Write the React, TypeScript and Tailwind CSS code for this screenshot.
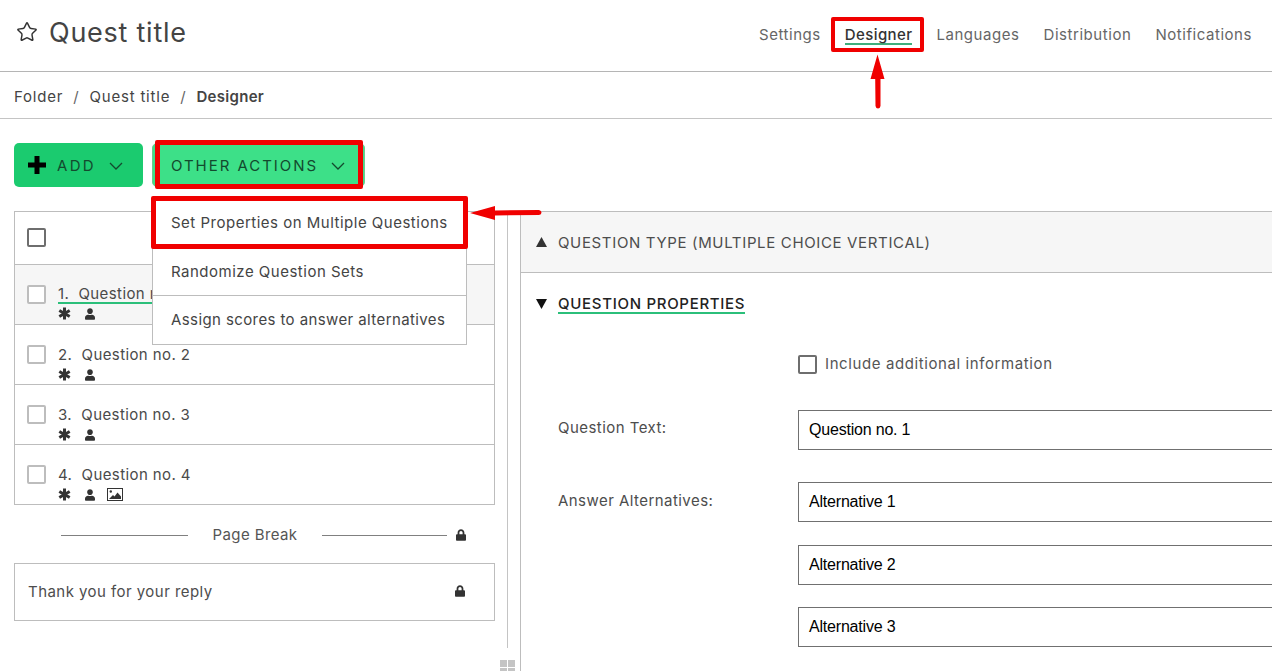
import { Star } from "lucide-react";
import { FaUser, FaLock } from "react-icons/fa";

const font = "font-['Inter','Liberation_Sans',sans-serif]";

function Check({ dark = false }: { dark?: boolean }) {
  return <span className={`block w-[19px] h-[19px] shrink-0 rounded-[2px] border-2 bg-white ${dark ? "border-[#6e6e6e]" : "border-[#bdbdbd]"}`} />;
}

function Asterisk() {
  return (
    <svg width="13" height="13" viewBox="0 0 13 13" className="shrink-0">
      <path d="M6.5 0.5V12.5M1.3 3.5L11.7 9.5M11.7 3.5L1.3 9.5" stroke="#333" strokeWidth="3" />
    </svg>
  );
}

function ImageIcon() {
  return (
    <svg width="16" height="13" viewBox="0 0 16 13" className="shrink-0">
      <rect x="0.5" y="0.5" width="15" height="12" fill="#fff" stroke="#333" />
      <circle cx="3.8" cy="3.5" r="1.2" fill="#333" />
      <path d="M2 11L6 7L7.5 8.5L10.5 4.5L14 8.5V11Z" fill="#333" />
    </svg>
  );
}

function Triangle({ down = false, color }: { down?: boolean; color: string }) {
  return (
    <svg width="11" height="10" viewBox="0 0 11 10" className="shrink-0">
      <path d={down ? "M0 0H11L5.5 10Z" : "M0 10H11L5.5 0Z"} fill={color} />
    </svg>
  );
}

function Chevron({ className }: { className: string }) {
  return (
    <svg width="14" height="8" viewBox="0 0 14 8" fill="none" className={`shrink-0 ${className}`}>
      <path d="M1 1L7 7L13 1" stroke="#134a2e" strokeWidth="1.3" />
    </svg>
  );
}

function Row({ n, label, active = false, image = false, last = false }: { n: number; label: string; active?: boolean; image?: boolean; last?: boolean }) {
  return (
    <div className={`flex pl-[12px] pt-[20px] ${active ? "bg-[#f6f6f6]" : "bg-white"} ${last ? "h-[59px]" : "h-[60px] border-b border-[#bdbdbd]"}`}>
      <Check />
      <div className={`ml-[12px] ${active ? "" : "mt-[1px]"}`}>
        <div className={`h-[19px] text-[15px] leading-[18px] tracking-[0.4px] whitespace-nowrap text-[#4a4a4a] ${active ? "w-[95px] border-b-2 border-[#2bbf7a]" : ""}`}>
          {n}.&nbsp; {label}
        </div>
        <div className="flex items-center gap-[14px] mt-[3px]">
          <Asterisk />
          <FaUser className="w-[10px] h-[12px] text-[#333]" />
          {image && <span className="-ml-[2px]"><ImageIcon /></span>}
        </div>
      </div>
    </div>
  );
}

function Field({ label, value, mt, labelPt = "pt-[9px]" }: { label?: string; value: string; mt: string; labelPt?: string }) {
  return (
    <div className={`flex ${mt}`}>
      <div className={`w-[277px] shrink-0 pl-[37px] ${labelPt} text-[15px] leading-[18px] tracking-[0.45px] text-[#4d4d4d] whitespace-nowrap`}>{label}</div>
      <div className="w-[600px] shrink-0 h-[40px] border border-[#707070] flex items-center pl-[10px] font-['Liberation_Sans',sans-serif] text-[16px] tracking-[-0.2px] text-black">{value}</div>
    </div>
  );
}

export default function App() {
  return (
    <div className={`relative w-[1272px] h-[671px] overflow-hidden bg-white ${font}`}>
      <header className="h-[72px] border-b border-[#b5b5b5] flex justify-between pl-[16px] pr-[20px]">
        <div className="flex items-center gap-[11px] h-[63px]">
          <Star className="w-[22px] h-[22px] text-[#333]" strokeWidth={1.6} />
          <h1 className="mt-[4px] text-[27px] font-normal tracking-[0.75px] text-[#444]">Quest title</h1>
        </div>
        <nav className="flex items-start gap-[24px] pt-[26px] text-[15px] leading-[18px] tracking-[0.55px] text-[#666]">
          <span>Settings</span>
          <span className="text-[#333] font-medium tracking-[0.4px] border-b-2 border-[#3fae7c] h-[19px]">Designer</span>
          <span>Languages</span>
          <span>Distribution</span>
          <span>Notifications</span>
        </nav>
      </header>

      <div className="h-[47px] border-b border-[#c4c4c4] flex items-center pl-[14px] pt-[4px] text-[15px] tracking-[0.8px] text-[#444]">
        <span>Folder</span>
        <span className="mx-[10px] text-[#666]">/</span>
        <span>Quest title</span>
        <span className="mx-[10px] text-[#666]">/</span>
        <span className="font-semibold tracking-[0.3px]">Designer</span>
      </div>

      <div className="flex pl-[14px] pt-[24px] gap-[9px]">
        <button className="w-[129px] h-[44px] rounded-[5px] bg-[#1bcb6f] flex items-center pl-[14px] text-[15px] tracking-[2.3px] text-[#134a2e]">
          <svg width="18" height="18" viewBox="0 0 18 18" className="shrink-0">
            <path d="M9 0V18M0 9H18" stroke="#000" strokeWidth="5" />
          </svg>
          <span className="ml-[11px] mt-[2px]">ADD</span>
          <Chevron className="ml-[13px] mt-[2px]" />
        </button>
        <button className="w-[213px] h-[44px] rounded-[5px] bg-[#3de088] border border-[#6fc78f] flex items-center pl-[18px] text-[15px] tracking-[1.95px] text-[#134a2e]">
          <span className="mt-[2px]">OTHER ACTIONS</span>
          <Chevron className="ml-[13px] mt-[2px]" />
        </button>
      </div>

      <main className="flex mt-[24px] pl-[14px]">
        <section className="w-[481px] shrink-0">
          <div className="border border-[#bdbdbd]">
            <div className="h-[53px] border-b border-[#bdbdbd] pl-[12px] pt-[16px]">
              <Check dark />
            </div>
            <Row n={1} label="Question no. 1" active />
            <Row n={2} label="Question no. 2" />
            <Row n={3} label="Question no. 3" />
            <Row n={4} label="Question no. 4" image last />
          </div>

          <div className="flex items-center h-[20px] mt-[20px] pl-[47px] text-[15px] tracking-[0.4px] text-[#555]">
            <span className="w-[127px] h-px bg-[#808080]" />
            <span className="w-[134px] text-center">Page Break</span>
            <span className="w-[125px] h-px bg-[#808080]" />
            <FaLock className="w-[10px] h-[12px] ml-[9px] text-[#333]" />
          </div>

          <div className="mt-[18px] h-[58px] border border-[#bdbdbd] flex items-center justify-between pl-[13px] pr-[29px] text-[15px] tracking-[0.45px] text-[#4d4d4d]">
            <span>Thank you for your reply</span>
            <FaLock className="w-[10px] h-[12px] -mt-[2px] text-[#333]" />
          </div>
        </section>

        <div className="w-[25px] shrink-0 relative">
          <div className="absolute left-[12px] top-0 h-[437px] w-px bg-[#c4c4c4]" />
          <div className="absolute left-[5px] top-[449px] grid grid-cols-2 gap-[1px]">
            <span className="w-[7px] h-[7px] bg-[#c4c4c4]" />
            <span className="w-[7px] h-[7px] bg-[#c4c4c4]" />
            <span className="w-[7px] h-[7px] bg-[#c4c4c4]" />
            <span className="w-[7px] h-[7px] bg-[#c4c4c4]" />
          </div>
        </div>

        <section className="flex-1 min-w-0 border-l border-t border-[#bdbdbd] h-[460px] overflow-hidden">
          <div className="h-[61px] bg-[#f6f6f6] border-b border-[#bdbdbd] flex items-center pl-[15px] text-[15px] tracking-[0.65px] text-[#4d4d4d]">
            <Triangle color="#333" />
            <span className="ml-[11px] mt-[2px] whitespace-nowrap">QUESTION TYPE (MULTIPLE CHOICE VERTICAL)</span>
          </div>
          <div className="flex items-start pl-[15px] pt-[22px]">
            <span className="mt-[4px]"><Triangle down color="#111" /></span>
            <span className="ml-[11px] h-[19px] font-medium border-b-2 border-[#2bbf7a] text-[15px] leading-[18px] tracking-[0.7px] text-[#222]">QUESTION PROPERTIES</span>
          </div>
          <div className="flex items-center ml-[277px] mt-[39px] text-[15px] tracking-[0.6px] text-[#555]">
            <Check dark />
            <span className="ml-[8px]">Include additional information</span>
          </div>
          <Field label="Question Text:" value="Question no. 1" mt="mt-[34px]" />
          <Field label="Answer Alternatives:" value="Alternative 1" mt="mt-[32px]" labelPt="pt-[10px]" />
          <Field value="Alternative 2" mt="mt-[23px]" />
          <Field value="Alternative 3" mt="mt-[22px]" />
        </section>
      </main>

      {/* open dropdown */}
      <div className="absolute left-[152px] top-[197px] w-[315px] border border-[#bdbdbd] bg-white text-[15px] tracking-[0.5px] text-[#444]">
        <div className="h-[50px] pt-[1px] flex items-center pl-[18px]">Set Properties on Multiple Questions</div>
        <div className="h-[48px] pt-[1px] flex items-center pl-[18px] border-b border-[#bdbdbd]">Randomize Question Sets</div>
        <div className="h-[48px] pt-[1px] flex items-center pl-[18px] tracking-[0.4px]">Assign scores to answer alternatives</div>
      </div>

      {/* red annotations */}
      <div className="absolute left-[831px] top-[17px] w-[93px] h-[35px] rounded-[2px] border-[4px] border-[#f00000]" />
      <div className="absolute left-[155px] top-[140px] w-[208px] h-[49px] rounded-[2px] border-[5px] border-[#f00000]" />
      <div className="absolute left-[151px] top-[196px] w-[317px] h-[53px] rounded-[2px] border-[5px] border-[#f00000]" />
      <svg className="absolute left-[860px] top-[50px]" width="30" height="62" viewBox="0 0 30 62" fill="none">
        <path d="M17.5 4.5L24.5 29H20.5L20.5 56Q20 58.5 18 58.5Q16 58.5 15.5 56L15.2 29H10.5Z" fill="#f00000" />
      </svg>
      <svg className="absolute left-[465px] top-[200px]" width="80" height="26" viewBox="0 0 80 26" fill="none">
        <path d="M5 13L30 6V10.5L74 10Q76.5 10.5 76.5 12.5Q76.5 14.5 74 15L30 15.5V20Z" fill="#f00000" />
      </svg>
    </div>
  );
}
